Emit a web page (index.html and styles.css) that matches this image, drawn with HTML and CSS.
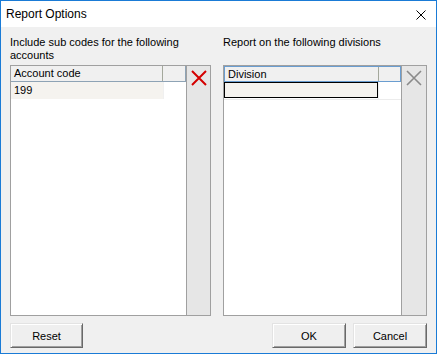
FILE: index.html
```html
<!DOCTYPE html>
<html lang="en">
<head>
    <meta charset="UTF-8">
    <title>Report Options</title>
    <link rel="stylesheet" href="styles.css">
</head>
<body>
    <div class="window">
        <div class="titlebar">
            <span class="title">Report Options</span>
            <svg class="close" width="10" height="10" viewBox="0 0 10 10">
                <path d="M0.5 0.5 L9.5 9.5 M9.5 0.5 L0.5 9.5" stroke="#000" stroke-width="1" fill="none"/>
            </svg>
        </div>
        <div class="content">
            <div class="columns">
                <!-- Left: account codes -->
                <div class="column left">
                    <div class="label">Include sub codes for the following<br>accounts</div>
                    <div class="list-area">
                        <div class="grid">
                            <div class="grid-header">
                                <div class="head-cell main">Account code</div>
                                <div class="head-cell extra"></div>
                            </div>
                            <div class="grid-row">
                                <div class="cell main">199</div>
                                <div class="cell extra"></div>
                            </div>
                        </div>
                        <div class="side-panel">
                            <svg class="del-icon" width="16" height="16" viewBox="0 0 16 16">
                                <path d="M1 1 L15 15 M15 1 L1 15" stroke="#d40000" stroke-width="2" fill="none"/>
                            </svg>
                        </div>
                    </div>
                </div>

                <!-- Right: divisions -->
                <div class="column right">
                    <div class="label">Report on the following divisions</div>
                    <div class="list-area">
                        <div class="grid">
                            <div class="grid-header blue">
                                <div class="head-cell main">Division</div>
                                <div class="head-cell extra"></div>
                            </div>
                            <div class="grid-row divided">
                                <div class="cell main editing"></div>
                                <div class="cell extra"></div>
                            </div>
                        </div>
                        <div class="side-panel">
                            <svg class="del-icon" width="16" height="16" viewBox="0 0 16 16">
                                <path d="M1 1 L15 15 M15 1 L1 15" stroke="#8a8a8a" stroke-width="1.6" fill="none"/>
                            </svg>
                        </div>
                    </div>
                </div>
            </div>

            <div class="footer">
                <button class="btn reset">Reset</button>
                <div class="spacer"></div>
                <button class="btn">OK</button>
                <button class="btn">Cancel</button>
            </div>
        </div>
    </div>
</body>
</html>
```

FILE: styles.css
```css
* {
    box-sizing: border-box;
}
body {
    margin: 0;
    padding: 0;
    background-color: #ffffff;
    font-family: "Liberation Sans", Arial, sans-serif;
    font-size: 11px;
    color: #000;
}
.window {
    width: 437px;
    height: 354px;
    border: 1px solid #1a7bd6;
    display: flex;
    flex-direction: column;
    background-color: #f0f0f0;
}
.titlebar {
    height: 26px;
    background-color: #fff;
    display: flex;
    align-items: center;
    padding-left: 5px;
    padding-right: 10px;
}
.title {
    flex: 1;
    font-size: 12px;
    padding-bottom: 1px;
}
.close {
    display: block;
    margin-top: 1px;
}
.content {
    flex: 1;
    display: flex;
    flex-direction: column;
    padding: 9px 9px 0 9px;
}
.columns {
    display: flex;
    gap: 12px;
}
.column.left {
    width: 201px;
}
.column.right {
    width: 204px;
}
.label {
    height: 29px;
    line-height: 13px;
}
.list-area {
    display: flex;
    height: 251px;
}
.grid {
    flex: 1;
    background-color: #fff;
    border: 1px solid #a0a0a0;
    border-right: none;
}
.grid-header {
    display: flex;
    height: 16px;
    background-color: #f0f0f0;
    border: 1px solid #8ea3b5;
    border-left: none;
    border-top: none;
}
.grid-header.blue {
    border-color: #6a9dd0;
    border-left: 1px solid #6a9dd0;
    border-top: 1px solid #6a9dd0;
}
.head-cell {
    line-height: 14px;
    padding-left: 3px;
}
.head-cell.main {
    width: 152px;
    border-right: 1px solid #a4a89c;
}
.right .head-cell.main {
    width: 154px;
}
.grid-row {
    display: flex;
    height: 17px;
}
.grid-row.divided {
    border-bottom: 1px solid #ececec;
    height: 18px;
}
.cell {
    line-height: 16px;
    padding-left: 3px;
}
.cell.main {
    width: 152px;
    background-color: #f5f3ef;
}
.right .cell.main {
    width: 154px;
}
.cell.editing {
    border: 1px solid #000;
    height: 16px;
}
.cell.extra {
    flex: 1;
    border-left: 1px solid #f0f0f0;
}
.side-panel {
    width: 25px;
    border: 1px solid #a0a0a0;
    background-color: #e6e6e6;
    display: flex;
    justify-content: center;
    align-items: flex-start;
    padding-top: 4px;
}
.right .side-panel {
    width: 26px;
}
.del-icon {
    display: block;
}
.footer {
    display: flex;
    gap: 7px;
    margin-top: 7px;
}
.spacer {
    flex: 1;
}
.btn {
    width: 74px;
    height: 25px;
    font-family: "Liberation Sans", Arial, sans-serif;
    font-size: 11px;
    color: #000;
    background-color: #efefef;
    border: 1px solid;
    border-color: #e3e3e3 #696969 #696969 #e3e3e3;
    box-shadow: inset 1px 1px #fff, inset -1px -1px #a0a0a0;
    padding: 0;
}
.btn.reset {
    width: 73px;
}
```
